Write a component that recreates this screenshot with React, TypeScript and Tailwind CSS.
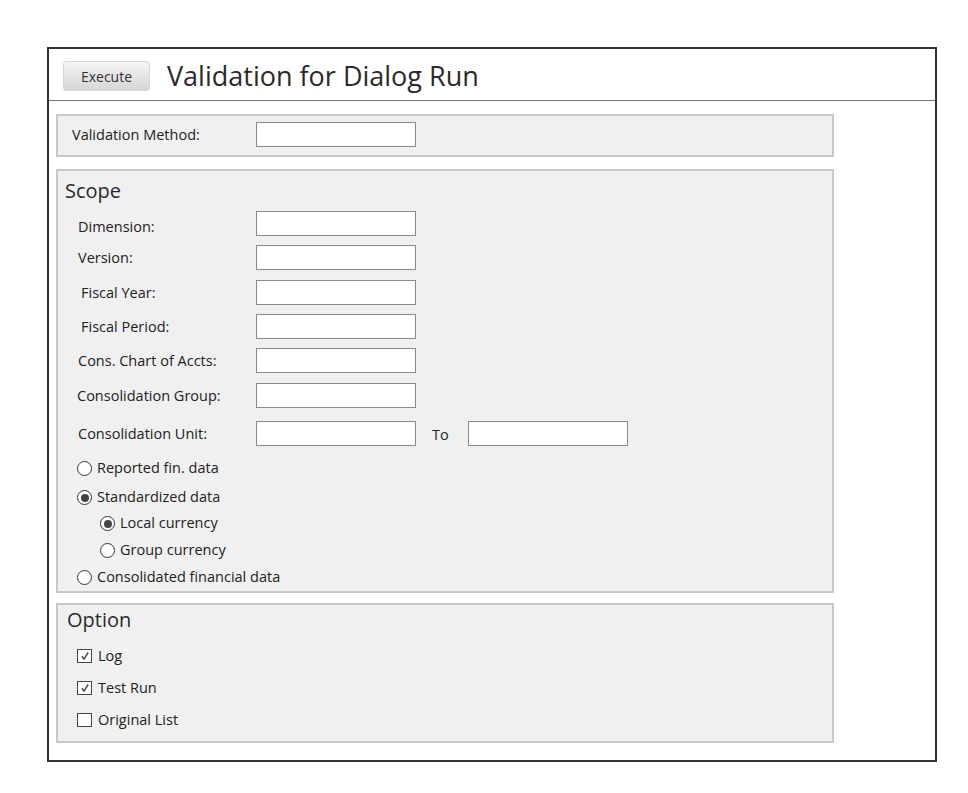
import React from "react";

const font = { fontFamily: '"Open Sans", "Noto Sans", sans-serif' };

function Field({ w = "w-[160px]" }: { w?: string }) {
  return <div className={`${w} h-[25px] bg-white border border-[#8a8a8a]`} />;
}

function Radio({ checked, label }: { checked?: boolean; label: string }) {
  return (
    <div className="flex items-center gap-[5px]">
      <span className="w-[15px] h-[15px] rounded-full border-[1.5px] border-[#333] bg-white flex items-center justify-center">
        {checked && <span className="w-[8px] h-[8px] rounded-full bg-[#444]" />}
      </span>
      <span className="text-[14.5px] text-[#222] leading-none">{label}</span>
    </div>
  );
}

function Check({ checked, label }: { checked?: boolean; label: string }) {
  return (
    <div className="flex items-center gap-[6px]">
      <span className="w-[15px] h-[14px] border-[1.5px] border-[#444] bg-white flex items-center justify-center">
        {checked && (
          <svg width="10" height="10" viewBox="0 0 10 10">
            <path d="M1.8 5.2 L4 8 L8.2 1.5" fill="none" stroke="#444" strokeWidth="1.4" />
          </svg>
        )}
      </span>
      <span className="text-[14.5px] text-[#222] leading-none">{label}</span>
    </div>
  );
}

function Row({ label, ml, mt, lt = "", children }: { label: string; ml: string; mt: string; lt?: string; children?: React.ReactNode }) {
  return (
    <div className={`flex items-center h-[25px] ${mt}`}>
      <div className="w-[198px] flex">
        <span className={`${ml} ${lt} text-[14.5px] text-[#222]`}>{label}</span>
      </div>
      <Field />
      {children}
    </div>
  );
}

export default function App() {
  return (
    <div className="w-[968px] h-[793px] bg-white pt-[47px] pl-[47px]" style={font}>
      <div className="w-[890px] h-[715px] border-2 border-[#333] flex flex-col">
        <div className="h-[52px] flex items-center pl-[14px] pt-[3px] border-b border-[#777]">
          <button className="w-[87px] h-[30px] rounded-[3px] bg-gradient-to-b from-[#f4f4f4] to-[#d6d6d6] text-[14px] text-[#333] border border-[#d8d8d8]">
            Execute
          </button>
          <h1 className="ml-[17px] text-[27px] text-[#2a2a2a] leading-none -mt-[2px]">Validation for Dialog Run</h1>
        </div>

        <div className="ml-[7px] mt-[13px] w-[778px] h-[43px] border-2 border-[#c8c8c8] bg-[#f0f0f0] flex items-start pt-[6px]">
          <div className="w-[198px] flex h-[25px] items-center">
            <span className="ml-[14px] text-[14.5px] text-[#222]">Validation Method:</span>
          </div>
          <Field />
        </div>

        <div className="ml-[7px] mt-[12px] w-[778px] h-[424px] border-2 border-[#c8c8c8] bg-[#f0f0f0] flex flex-col">
          <div className="ml-[7px] mt-[5px] h-[30px] text-[20px] text-[#2a2a2a] leading-[30px]">Scope</div>
          <Row label="Dimension:" ml="ml-[20px]" mt="mt-[5px]" lt="mt-[7px]" />
          <Row label="Version:" ml="ml-[20px]" mt="mt-[9px]" />
          <Row label="Fiscal Year:" ml="ml-[23px]" mt="mt-[10px]" />
          <Row label="Fiscal Period:" ml="ml-[23px]" mt="mt-[9px]" />
          <Row label="Cons. Chart of Accts:" ml="ml-[20px]" mt="mt-[9px]" />
          <Row label="Consolidation Group:" ml="ml-[19px]" mt="mt-[10px]" />
          <Row label="Consolidation Unit:" ml="ml-[20px]" mt="mt-[13px]">
            <span className="ml-[16px] w-[36px] text-[14.5px] text-[#222] mt-[3px]">To</span>
            <Field />
          </Row>
          <div className="ml-[19px] mt-[15px] flex flex-col">
            <div className="h-[15px] flex items-center"><Radio label="Reported fin. data" /></div>
            <div className="h-[15px] mt-[14px] flex items-center"><Radio checked label="Standardized data" /></div>
            <div className="h-[15px] mt-[11px] ml-[23px] flex items-center"><Radio checked label="Local currency" /></div>
            <div className="h-[15px] mt-[12px] ml-[23px] flex items-center"><Radio label="Group currency" /></div>
            <div className="h-[15px] mt-[12px] flex items-center"><Radio label="Consolidated financial data" /></div>
          </div>
        </div>

        <div className="ml-[7px] mt-[10px] w-[778px] h-[140px] border-2 border-[#c8c8c8] bg-[#f0f0f0] flex flex-col">
          <div className="ml-[9px] mt-[0px] h-[30px] text-[20px] text-[#2a2a2a] leading-[30px]">Option</div>
          <div className="ml-[19px] mt-[14px] flex flex-col">
            <div className="h-[14px] flex items-center"><Check checked label="Log" /></div>
            <div className="h-[14px] mt-[18px] flex items-center"><Check checked label="Test Run" /></div>
            <div className="h-[14px] mt-[18px] flex items-center"><Check label="Original List" /></div>
          </div>
        </div>
      </div>
    </div>
  );
}
